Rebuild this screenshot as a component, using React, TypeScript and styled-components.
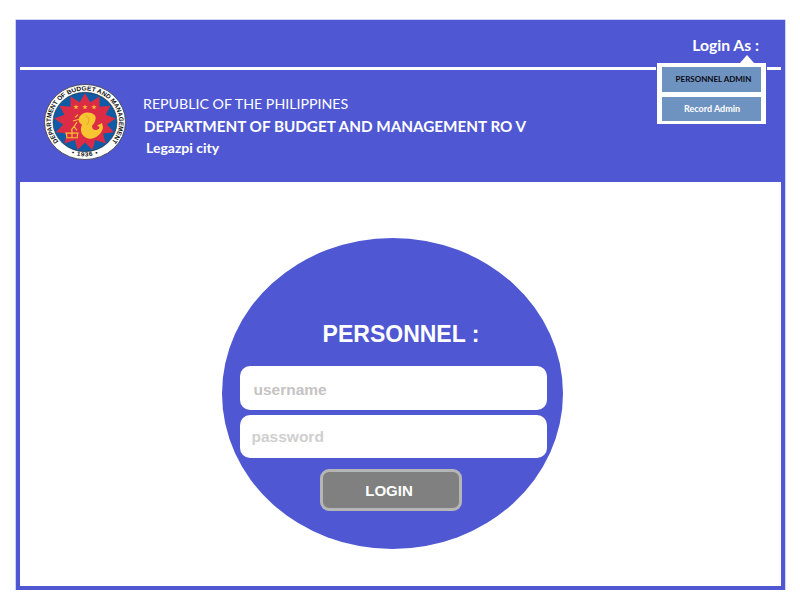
import React from "react";
import styled, { createGlobalStyle } from "styled-components";

const BLUE = "#4f58d2";

const Global = createGlobalStyle`
  html, body { margin: 0; padding: 0; background: #fff; }
  * { box-sizing: border-box; }
`;

const Frame = styled.div`
  position: relative;
  width: 769px;
  height: 570px;
  margin: 20px 0 0 16px;
  border: 4px solid ${BLUE};
  box-shadow: 0 0 0 0.5px #a4a8ea;
  display: flex;
  flex-direction: column;
  background: #fff;
  font-family: Lato, "Open Sans", sans-serif;
`;

const TopBand = styled.div`
  height: 43px;
  background: ${BLUE};
  display: flex;
  justify-content: flex-end;
  align-items: flex-start;
  padding: 12px 22px 0 0;
`;

const LoginAs = styled.div`
  color: #fff;
  font-size: 15.7px;
  font-weight: 700;
  line-height: 18px;
`;

const Rule = styled.div`
  height: 3px;
  background: #fff;
`;

const Header = styled.header`
  height: 112px;
  background: ${BLUE};
  display: flex;
  align-items: flex-start;
  padding: 14px 0 0 24px;
  gap: 17px;
  color: #fff;
`;

const Titles = styled.div`
  display: flex;
  flex-direction: column;
  padding-top: 10px;
`;

const Republic = styled.div`
  font-size: 14.2px;
  line-height: 20px;
`;

const Department = styled.div`
  font-size: 15.25px;
  font-weight: 700;
  line-height: 22px;
  margin: 1px 0 0 1px;
`;

const City = styled.div`
  font-size: 14px;
  font-weight: 700;
  line-height: 18px;
  margin: 2px 0 0 3px;
`;

const Main = styled.main`
  flex: 1;
  padding: 56px 0 0 202px;
`;

const Ellipse = styled.form`
  width: 341px;
  height: 311px;
  border-radius: 50%;
  background: ${BLUE};
  display: flex;
  flex-direction: column;
  align-items: center;
  font-family: "Liberation Sans", Arial, sans-serif;
`;

const Heading = styled.h1`
  margin: 83px 0 0 17px;
  color: #fff;
  font-size: 23px;
  font-weight: 700;
  line-height: 26px;
`;

const Field = styled.div<{ $top: number; $height: number; $indent: number; $lift: number; $colour: string }>`
  width: 307px;
  height: ${(p) => p.$height}px;
  margin: ${(p) => p.$top}px 0 0 1px;
  padding-left: ${(p) => p.$indent}px;
  padding-top: ${(p) => p.$lift}px;
  border-radius: 10px;
  background: #fff;
  color: ${(p) => p.$colour};
  font-size: 15.5px;
  font-weight: 700;
  display: flex;
  align-items: center;
`;

const LoginButton = styled.button`
  width: 142px;
  height: 42px;
  margin: 11px 0 0 -3px;
  border: 3px solid #b5b5b5;
  border-radius: 9px;
  background: #808080;
  color: #fff;
  font-family: inherit;
  font-size: 15px;
  font-weight: 700;
  padding: 0 4px 0 0;
`;

const Popup = styled.div`
  position: absolute;
  top: 39px;
  left: 637px;
  width: 109px;
  height: 61px;
  background: #fff;
  box-shadow: 0 0 0 1px ${BLUE};
  padding: 4px 5px 3px;
  display: flex;
  flex-direction: column;
  gap: 5px;

  &::before {
    content: "";
    position: absolute;
    top: -8px;
    left: 83px;
    border-left: 7px solid transparent;
    border-right: 7px solid transparent;
    border-bottom: 8px solid #fff;
  }
`;

const PopupItem = styled.div<{ $active?: boolean }>`
  flex: 1;
  background: #6f93c0;
  color: ${(p) => (p.$active ? "#0a0a14" : "#fff")};
  font-size: ${(p) => (p.$active ? 8 : 9)}px;
  font-weight: 700;
  padding-left: ${(p) => (p.$active ? 4 : 1)}px;
  display: flex;
  align-items: center;
  justify-content: center;
`;

const SealSvg = styled.svg`
  width: 82px;
  height: 76px;
  flex: none;
`;

const starPoints = (cx: number, cy: number, outer: number, inner: number, n: number, rot = 0) =>
  Array.from({ length: n * 2 }, (_, i) => {
    const r = i % 2 ? inner : outer;
    const a = (Math.PI * i) / n - Math.PI / 2 + rot;
    return `${(cx + r * Math.cos(a)).toFixed(2)},${(cy + r * Math.sin(a)).toFixed(2)}`;
  }).join(" ");

const Seal = () => (
  <SealSvg viewBox="0 0 82 82" preserveAspectRatio="none" aria-label="DBM seal">
    <defs>
      <path id="sealTop" d="M 14.96 62.86 A 34 34 0 1 1 67.04 62.86" />
      <path id="sealBottom" d="M 14 67 A 38.2 38.2 0 0 0 68 67" />
    </defs>
    <circle cx="41" cy="41" r="40.5" fill="#fff" stroke="#444" strokeWidth="0.9" />
    <circle cx="41" cy="41" r="32" fill="#0f5ba6" stroke="#222" strokeWidth="0.6" />
    <polygon points={starPoints(41, 41, 31, 22, 13)} fill="#dc2c45" />
    <text fontFamily="Liberation Sans, sans-serif" fontWeight="700" fontSize="6.6" fill="#111">
      <textPath href="#sealTop" startOffset="50%" textAnchor="middle" textLength="152">
        DEPARTMENT OF BUDGET AND MANAGEMENT
      </textPath>
    </text>
    <text fontFamily="Liberation Sans, sans-serif" fontWeight="700" fontSize="6.5" fill="#111" letterSpacing="0.7">
      <textPath href="#sealBottom" startOffset="50%" textAnchor="middle">
        •  1936  •
      </textPath>
    </text>
    <polygon points={starPoints(32, 25, 2.8, 1.1, 5)} fill="#f7c531" />
    <polygon points={starPoints(41, 25, 2.8, 1.1, 5)} fill="#f7c531" />
    <polygon points={starPoints(50, 25, 2.8, 1.1, 5)} fill="#f7c531" />
    <path
      d="M35 37 C37 30 47 29 51 34 C53 38 50 43 48 45 C48 50 52 51 55 48 L53 45 L58 42 L59 47 C58 54 51 60 45 59 C38 58 35 50 38 44 C35 42 34 40 35 37 Z"
      fill="#f7c531"
    />
    <path
      d="M31 36 L34 33 M29 40 L35 38 M33 41 L30 46 L33 50 M30 46 L27 50 M28 50 L28 58 M22 58 L34 58 M23 57 L22 53 L34 53 L33 57"
      fill="none"
      stroke="#f7c531"
      strokeWidth="1.2"
    />
    <circle cx="54" cy="47" r="1.3" fill="#dc2c45" />
    <path d="M42 34 C45 36 46 40 43 44" fill="none" stroke="#e89a1a" strokeWidth="1" />
  </SealSvg>
);

export default function App() {
  return (
    <>
      <Global />
      <Frame>
        <TopBand>
          <LoginAs>Login As :</LoginAs>
        </TopBand>
        <Rule />
        <Header>
          <Seal />
          <Titles>
            <Republic>REPUBLIC OF THE PHILIPPINES</Republic>
            <Department>DEPARTMENT OF BUDGET AND MANAGEMENT RO V</Department>
            <City>Legazpi city</City>
          </Titles>
        </Header>
        <Main>
          <Ellipse>
            <Heading>PERSONNEL :</Heading>
            <Field $top={19} $height={44} $indent={14} $lift={4} $colour="#c6c3c3">username</Field>
            <Field $top={5} $height={43} $indent={12} $lift={0} $colour="#cfcfcf">password</Field>
            <LoginButton type="button">LOGIN</LoginButton>
          </Ellipse>
        </Main>
        <Popup>
          <PopupItem $active>PERSONNEL ADMIN</PopupItem>
          <PopupItem>Record Admin</PopupItem>
        </Popup>
      </Frame>
    </>
  );
}
